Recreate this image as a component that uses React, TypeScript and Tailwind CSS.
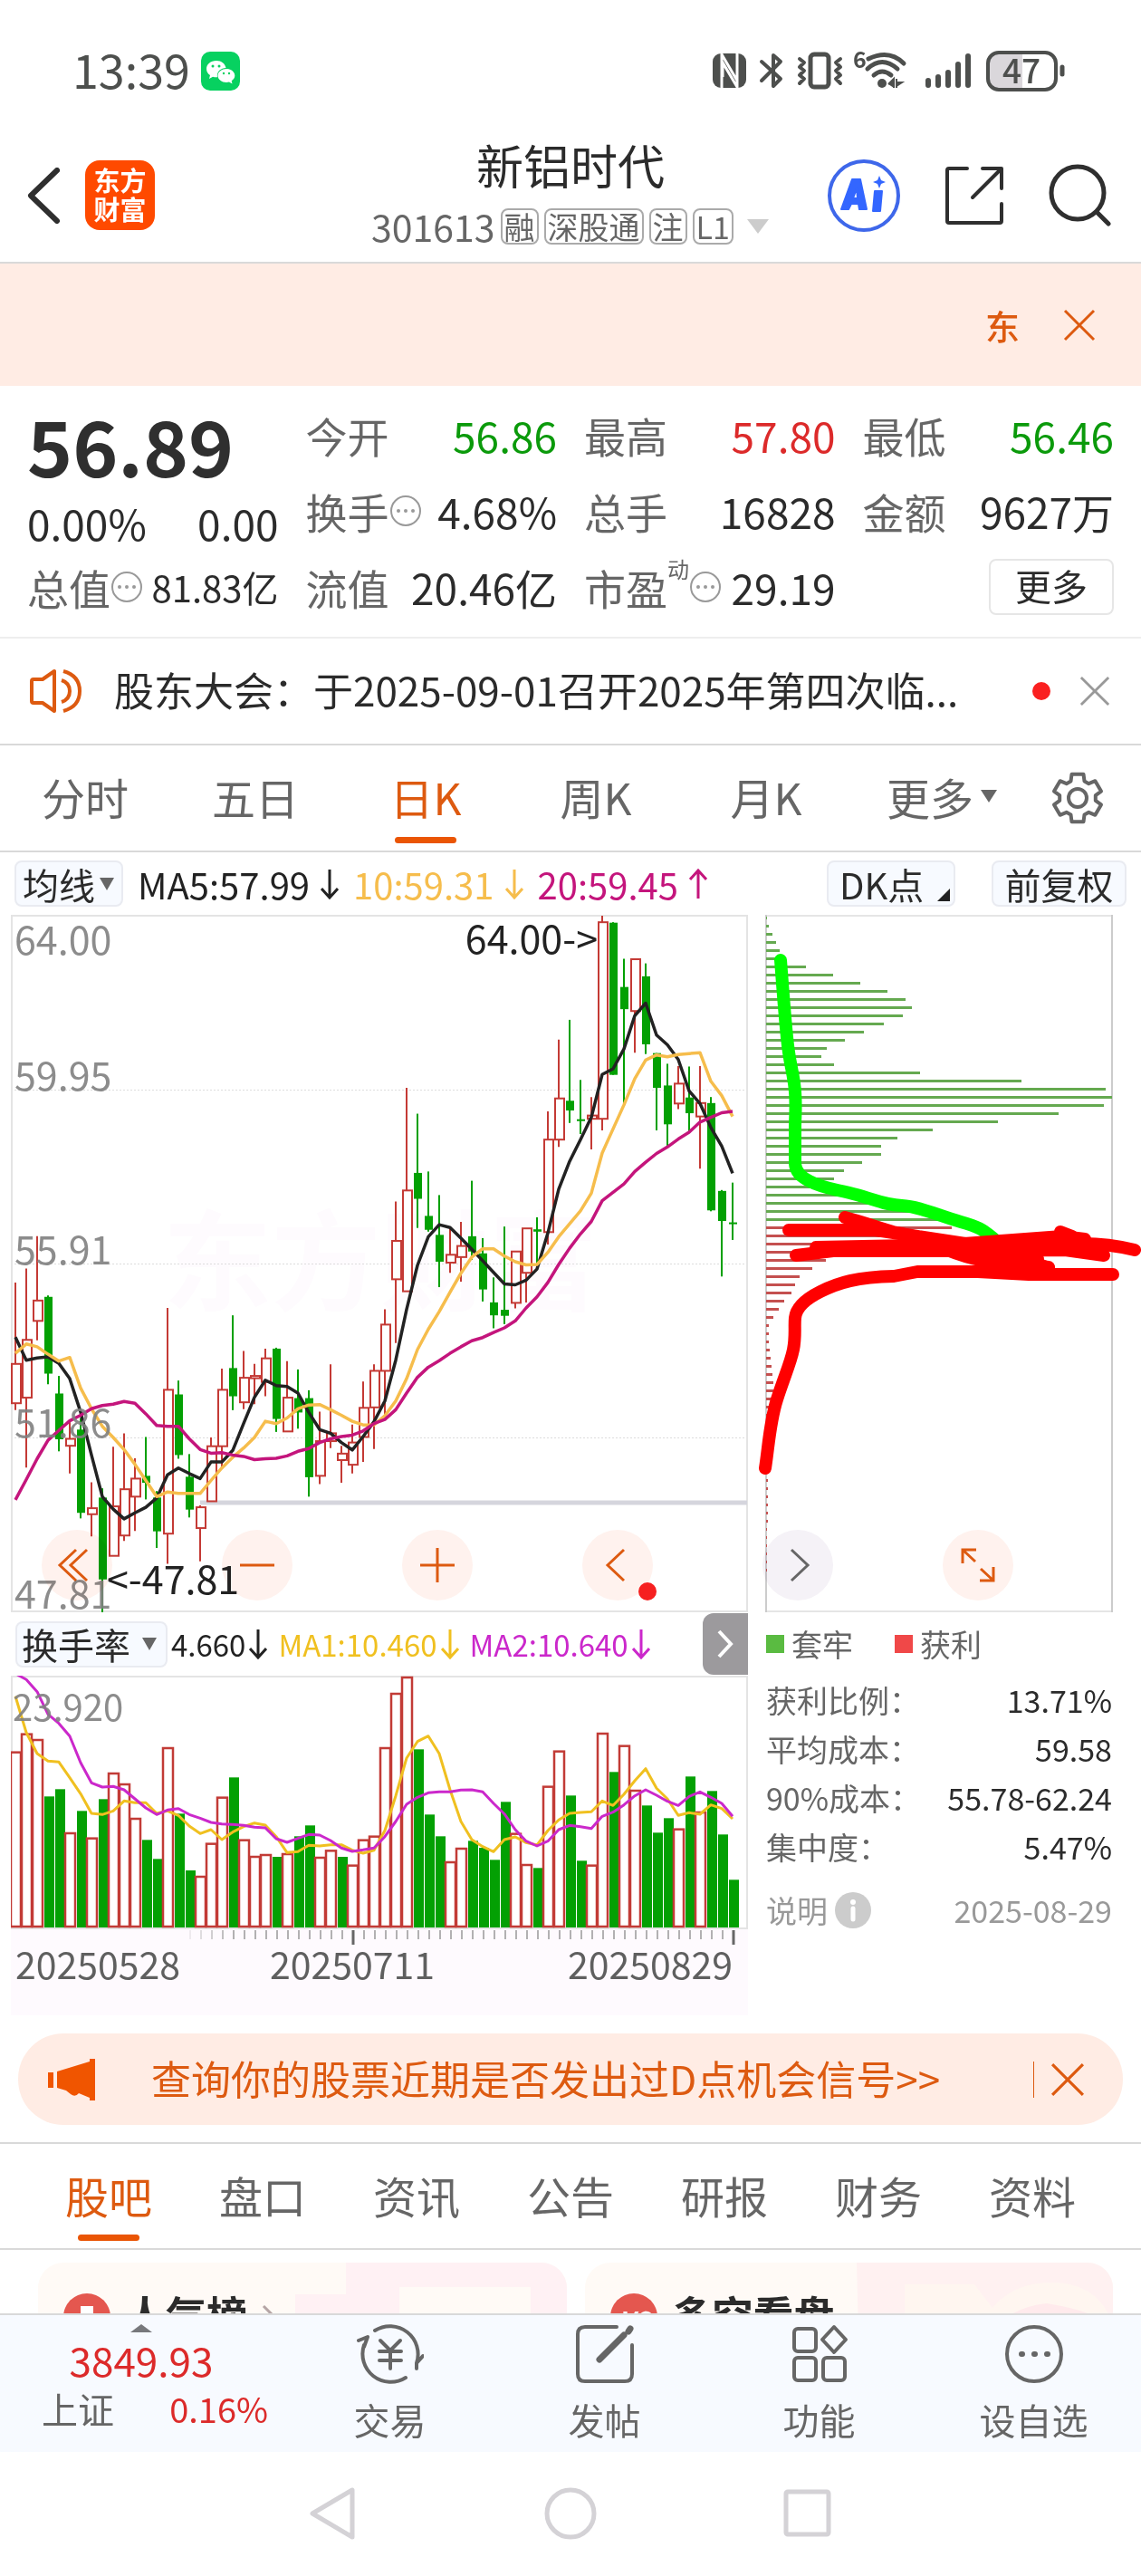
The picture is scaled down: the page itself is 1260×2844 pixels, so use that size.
import React from 'react';
import clsx from 'clsx';

// [direction, high, bodyTop, bodyBottom, low, turnoverTop]
type Candle = ['r' | 'g', number, number, number, number, number];

const candles: Candle[] = [
  ['r', 817, 993, 1078, 1093, 463],
  ['r', 787, 941, 1066, 1217, 403],
  ['r', 717, 856, 900, 942, 422],
  ['g', 845, 848, 1014, 1037, 612],
  ['g', 1019, 1057, 1156, 1182, 588],
  ['r', 1115, 1155, 1170, 1230, 731],
  ['g', 1110, 1135, 1315, 1327, 660],
  ['r', 1249, 1305, 1318, 1366, 748],
  ['g', 1262, 1282, 1459, 1530, 621],
  ['r', 1172, 1301, 1408, 1408, 533],
  ['r', 1143, 1264, 1364, 1376, 569],
  ['r', 1197, 1241, 1280, 1354, 683],
  ['g', 1151, 1235, 1250, 1286, 756],
  ['g', 1268, 1282, 1355, 1391, 819],
  ['r', 872, 1049, 1360, 1425, 449],
  ['g', 1029, 1059, 1190, 1198, 669],
  ['g', 1188, 1237, 1308, 1325, 857],
  ['r', 1299, 1303, 1348, 1420, 875],
  ['r', 1152, 1171, 1290, 1290, 766],
  ['r', 1003, 1049, 1171, 1218, 613],
  ['g', 888, 1002, 1063, 1093, 549],
  ['r', 965, 1023, 1076, 1091, 754],
  ['r', 993, 1019, 1024, 1080, 809],
  ['r', 960, 981, 1032, 1063, 803],
  ['g', 958, 960, 1112, 1140, 812],
  ['r', 987, 1066, 1139, 1139, 800],
  ['g', 1005, 1067, 1098, 1133, 744],
  ['g', 1050, 1067, 1238, 1280, 708],
  ['r', 1096, 1160, 1235, 1253, 812],
  ['r', 994, 1143, 1160, 1175, 789],
  ['g', 1170, 1187, 1201, 1250, 812],
  ['r', 1124, 1163, 1211, 1230, 838],
  ['r', 1031, 1088, 1151, 1205, 754],
  ['r', 994, 1008, 1087, 1177, 742],
  ['r', 875, 908, 1008, 1105, 449],
  ['r', 642, 727, 810, 948, 269],
  ['r', 396, 618, 836, 836, 215],
  ['g', 452, 580, 636, 699, 456],
  ['g', 577, 673, 703, 707, 672],
  ['g', 628, 714, 772, 827, 744],
  ['r', 700, 757, 774, 796, 827],
  ['r', 686, 738, 762, 815, 782],
  ['g', 597, 717, 750, 768, 759],
  ['g', 721, 754, 832, 858, 782],
  ['g', 806, 860, 888, 916, 822],
  ['g', 696, 876, 889, 907, 630],
  ['r', 750, 750, 861, 873, 733],
  ['r', 700, 700, 796, 860, 836],
  ['g', 676, 702, 707, 780, 849],
  ['r', 447, 508, 708, 735, 577],
  ['r', 292, 419, 508, 524, 460],
  ['g', 249, 424, 445, 472, 609],
  ['g', 379, 464, 468, 496, 825],
  ['r', 416, 456, 463, 529, 838],
  ['r', 24, 38, 463, 488, 401],
  ['g', 38, 39, 368, 368, 531],
  ['r', 117, 178, 226, 430, 442],
  ['r', 118, 118, 230, 320, 590],
  ['g', 127, 155, 302, 323, 642],
  ['g', 321, 321, 396, 488, 732],
  ['g', 344, 391, 475, 525, 684],
  ['r', 349, 387, 430, 442, 718],
  ['g', 350, 417, 451, 492, 546],
  ['r', 349, 429, 458, 571, 662],
  ['g', 416, 429, 661, 663, 594],
  ['g', 617, 619, 684, 804, 738],
  ['g', 601, 687, 690, 725, 888],
];

// the price pane colours these days differently from the turnover pane
const priceColor: Record<number, 'r' | 'g'> = { 30: 'r', 56: 'g' };

const ma5 = [
  935, 985, 980, 978, 992, 1025, 1097, 1190, 1280, 1307, 1328, 1315, 1303, 1283, 1233, 1218, 1230,
  1241, 1205, 1205, 1180, 1122, 1065, 1028, 1040, 1042, 1056, 1098, 1135, 1143, 1163, 1179, 1150,
  1118, 1073, 985, 875, 780, 718, 692, 698, 721, 745, 770, 795, 820, 822, 812, 788, 710, 615, 555,
  508, 460, 367, 355, 312, 240, 213, 282, 303, 335, 403, 430, 482, 522, 581,
];
const ma10 = [
  970, 950, 956, 972, 987, 979, 1045, 1090, 1128, 1152, 1178, 1210, 1245, 1280, 1270, 1273, 1273,
  1273, 1245, 1218, 1195, 1175, 1152, 1117, 1122, 1110, 1090, 1082, 1081, 1092, 1104, 1117, 1125,
  1125, 1105, 1073, 1025, 962, 918, 880, 838, 797, 762, 744, 744, 760, 772, 779, 778, 752, 718,
  690, 662, 624, 537, 485, 433, 376, 336, 325, 329, 324, 322, 320, 382, 413, 458,
];
const ma20 = [
  1287, 1243, 1198, 1158, 1137, 1116, 1104, 1090, 1083, 1080, 1074, 1078, 1101, 1126, 1128, 1128,
  1155, 1178, 1186, 1185, 1190, 1193, 1200, 1198, 1197, 1192, 1182, 1176, 1163, 1155, 1150, 1147,
  1138, 1122, 1113, 1092, 1056, 1022, 1000, 986, 970, 956, 943, 936, 925, 915, 900, 872, 848, 817,
  778, 743, 712, 685, 640, 622, 604, 577, 557, 538, 524, 507, 492, 470, 460, 450, 447,
];
const turnoverMa1 = [
  280, 400, 470, 495, 498, 550, 603, 668, 672, 660, 627, 633, 633, 668, 660, 675, 710, 735, 722,
  755, 730, 712, 700, 707, 745, 798, 795, 774, 776, 772, 772, 790, 800, 790, 725, 610, 485, 430,
  412, 470, 590, 695, 755, 778, 795, 755, 746, 765, 773, 725, 690, 668, 665, 663, 627, 642, 605,
  560, 520, 585, 620, 675, 666, 671, 640, 652, 686,
];
const turnoverMa2 = [
  205, 225, 265, 340, 370, 412, 500, 567, 581, 579, 590, 620, 650, 672, 657, 652, 672, 684, 698,
  703, 705, 708, 714, 716, 752, 764, 751, 738, 740, 758, 783, 794, 789, 783, 745, 695, 638, 615,
  600, 597, 597, 591, 590, 597, 635, 670, 722, 760, 776, 760, 722, 708, 712, 718, 678, 664, 640,
  610, 590, 608, 628, 642, 612, 597, 615, 635, 678,
];

// chip distribution, top price first
const trapped = [
  1, 3, 7, 11, 15, 16, 44, 74, 104, 134, 154, 161, 151, 130, 108, 87, 67, 61, 75, 170, 282, 375,
  382, 373, 323, 256, 184, 145, 127, 127, 106, 86, 75, 76, 104, 134, 160, 190,
];
const profit = [
  205, 195, 140, 92, 66, 51, 37, 32, 28, 20, 14, 8, 3, 3, 3, 4, 5, 6, 7, 8, 8, 8, 7, 6, 5, 5, 4, 4,
  3, 3, 2, 2, 2, 2, 2, 2, 2, 1, 1, 1, 1, 1, 1,
];

const cx = (i: number) => 5 + i * 12;
const py = (v: number) => ((v - 22) * 770) / 1508;
const vy = (v: number) => (v - 212) / 3;
const line = (values: number[], y: (v: number) => number) =>
  values.map((v, i) => `${cx(i)},${y(v).toFixed(1)}`).join(' ');

const gearPath = Array.from({ length: 6 })
  .flatMap((_, k) =>
    [[-22, 20], [-14, 27], [14, 27], [22, 20]].map(([d, r]) => {
      const a = ((k * 60 - 90 + d) * Math.PI) / 180;
      return `${(30 + r * Math.cos(a)).toFixed(1)},${(30 + r * Math.sin(a)).toFixed(1)}`;
    })
  )
  .join(' ');

function Cross({ size, className }: { size: number; className?: string }) {
  return (
    <svg width={size} height={size} viewBox="0 0 36 36" className={className}>
      <path d="M2 2 34 34M34 2 2 34" stroke="currentColor" strokeWidth="3" fill="none" />
    </svg>
  );
}

function Arrow({ up = false }: { up?: boolean }) {
  return (
    <svg width="20" height="34" viewBox="0 0 20 34" className={up ? 'rotate-180' : ''}>
      <path d="M10 1V32M1 22 10 32 19 22" stroke="currentColor" strokeWidth="3" fill="none" />
    </svg>
  );
}

function More() {
  return (
    <svg width="36" height="36" viewBox="0 0 36 36" className="text-[#999]">
      <circle cx="18" cy="18" r="16" stroke="currentColor" strokeWidth="2" fill="none" />
      <g fill="currentColor">
        <circle cx="10" cy="18" r="2" />
        <circle cx="18" cy="18" r="2" />
        <circle cx="26" cy="18" r="2" />
      </g>
    </svg>
  );
}

function StatusBar() {
  return (
    <div className="flex h-[110px] items-center justify-between pt-[46px] pr-[83px] pl-20 text-[#4d4f4d]">
      <div className="flex items-center gap-3">
        <span className="pb-1 text-[52px] leading-none">13:39</span>
        <svg width="43" height="43" viewBox="0 0 43 43">
          <rect width="43" height="43" rx="10" fill="#07d160" />
          <path
            d="M17 10c-6.600 0-11 4-11 9 0 3 1.500 5.500 4 7l-1 4 4-2.300c1.300.4 2.600.6 4 .6l1-.1c-1-6 4-10.200 9.500-10.200C26.500 13 22.500 10 17 10z"
            fill="#fff"
          />
          <path
            d="M28 19c-5 0-9.500 3.200-9.500 7.500S23 34 28 34c1 0 2-.2 3-.5l3.500 2-.8-3.300c2.200-1.400 3.600-3.400 3.600-5.700C37.300 22.200 33 19 28 19z"
            fill="#fff"
          />
          <g fill="#07d160">
            <circle cx="13" cy="16" r="1.500" />
            <circle cx="20" cy="16" r="1.500" />
            <circle cx="25" cy="24" r="1.200" />
            <circle cx="31" cy="24" r="1.200" />
          </g>
        </svg>
      </div>
      <svg width="390" height="46" viewBox="0 0 390 46" className="overflow-visible">
        {/* nfc */}
        <rect x="0" y="4" width="37" height="38" rx="9" fill="currentColor" />
        <path d="M10 42V5L27 34V17M27 4V41L11 14V30" stroke="#fff" strokeWidth="3" fill="none" />
        {/* bluetooth */}
        <path
          d="M54 13 75 32 67 40V6L75 13 54 34"
          stroke="currentColor"
          strokeWidth="4"
          fill="none"
          strokeLinecap="round"
          strokeLinejoin="round"
        />
        {/* vibrate */}
        <rect x="108" y="5" width="20" height="36" rx="4" stroke="currentColor" strokeWidth="5" fill="none" />
        <path
          d="M96 10l5 4-5 5 5 4-5 5 5 4-5 5M141 10l-5 4 5 5-5 4 5 5-5 4 5 5"
          stroke="currentColor"
          strokeWidth="4"
          fill="none"
          strokeLinecap="round"
          strokeLinejoin="round"
        />
        {/* wifi */}
        <text x="155" y="20" fontSize="25" fontWeight="700" fill="currentColor">
          6
        </text>
        <g stroke="currentColor" strokeWidth="5" fill="none" strokeLinecap="round">
          <path d="M172 10Q195 -1 211 15" />
          <path d="M171 21Q187 6 204 21" />
          <path d="M178 28Q187 20 197 28" />
        </g>
        <circle cx="187" cy="37" r="5" fill="currentColor" />
        <path d="M194 38l6-6v10M203 42V32M203 40l6-4h-6" stroke="currentColor" strokeWidth="2" fill="currentColor" />
        {/* signal */}
        <path
          d="M238 34V39M249 30V39M260 25V39M271 16V39M282 7V39"
          stroke="currentColor"
          strokeWidth="6"
          strokeLinecap="round"
        />
        {/* battery */}
        <path d="M342 4H314Q304 4 304 14V32Q304 42 314 42H342Z" fill="#dad7db" />
        <rect x="304" y="3" width="75" height="41" rx="12" stroke="currentColor" strokeWidth="4" fill="none" />
        <path d="M386 19V27" stroke="currentColor" strokeWidth="5" strokeLinecap="round" />
        <text x="341" y="37" fontSize="37" fontWeight="500" textAnchor="middle" fill="currentColor">
          47
        </text>
      </svg>
    </div>
  );
}

function Header() {
  return (
    <header className="grid h-[181px] grid-cols-[1fr_auto_1fr] items-center border-b-2 border-[#d9d9d9] px-[30px] pt-8">
      <div className="flex items-center gap-7">
        <button aria-label="返回">
          <svg width="36" height="62" viewBox="0 0 36 62">
            <path
              d="M33 3 4 31 33 59"
              stroke="#2f2f2f"
              strokeWidth="6"
              fill="none"
              strokeLinecap="round"
              strokeLinejoin="round"
            />
          </svg>
        </button>
        <a
          href="#home"
          className="flex size-[77px] flex-col items-center justify-center rounded-2xl bg-[#ff4a00] pb-1 text-[29px] leading-[32px] font-bold text-white"
        >
          <span>东方</span>
          <span>财富</span>
        </a>
      </div>
      <div className="text-center">
        <h1 className="text-[52px] leading-[68px] text-[#2b2b2b]">新铝时代</h1>
        <button className="flex h-[68px] items-center gap-[6px] text-[34px] leading-none text-[#666]">
          <span className="text-[41px]">301613</span>
          {['融', '深股通', '注', 'L1'].map((tag) => (
            <span key={tag} className="flex h-10 items-center rounded-lg border-2 border-[#aaa] px-[2px]">
              {tag}
            </span>
          ))}
          <svg width="26" height="18" viewBox="0 0 26 18" className="ml-2">
            <path d="M1 1H25L13 17Z" fill="#ccc" />
          </svg>
        </button>
      </div>
      <div className="flex items-center justify-end gap-[47px] pr-[3px]">
        <button aria-label="AI">
          <svg width="82" height="82" viewBox="0 0 82 82">
            <circle cx="41" cy="41" r="38" stroke="#3e67ea" strokeWidth="4" fill="none" />
            <path
              d="M28 23h9l7 33h-8l-1-6h-8l-3 6h-8zM33 33l-4 11h5z"
              fill="#3366ff"
              stroke="#3366ff"
              strokeWidth="2"
              strokeLinejoin="round"
              fillRule="evenodd"
            />
            <path d="M53 36h8l-2 22h-8z" fill="#3366ff" stroke="#3366ff" strokeWidth="2" strokeLinejoin="round" />
            <path d="M58 19l2 5 5 2-5 2-2 5-2-5-5-2 5-2z" fill="#3366ff" />
          </svg>
        </button>
        <button aria-label="分享">
          <svg width="68" height="68" viewBox="0 0 68 68">
            <path
              d="M26 4H6Q4 4 4 6V62Q4 64 6 64H62Q64 64 64 62V43M43 4H64V26M63 5 32 36"
              stroke="#2f2f2f"
              strokeWidth="4"
              fill="none"
              strokeLinecap="round"
              strokeLinejoin="round"
            />
          </svg>
        </button>
        <button aria-label="搜索">
          <svg width="70" height="70" viewBox="0 0 70 70">
            <circle cx="33" cy="32" r="29" stroke="#2f2f2f" strokeWidth="5" fill="none" />
            <path d="M54 53 67 66" stroke="#2f2f2f" strokeWidth="5" strokeLinecap="round" />
          </svg>
        </button>
      </div>
    </header>
  );
}

function Stat({
  label,
  value,
  icon,
  sup,
  color = 'text-[#2b2b2b]',
  size = 'text-[46px]',
}: {
  label: string;
  value: string;
  icon?: boolean;
  sup?: string;
  color?: string;
  size?: string;
}) {
  return (
    <div className="flex h-[84px] items-center whitespace-nowrap">
      <dt className="flex items-center text-[46px] leading-none text-[#666]">
        {label}
        {sup && <sup className="-top-5 text-[24px]">{sup}</sup>}
        {icon && <More />}
      </dt>
      <dd className={clsx('ml-auto leading-none', size, color)}>{value}</dd>
    </div>
  );
}

function Quote() {
  return (
    <section className="grid grid-cols-4 gap-x-[30px] border-b-2 border-[#eee] px-[30px] pt-3 pb-[13px]">
      <div>
        <div className="flex h-[110px] items-center pb-2 text-[85px] leading-none font-bold text-[#2f2f2f]">56.89</div>
        <div className="flex h-[58px] items-center justify-between text-[46px] leading-none text-[#2b2b2b]">
          <span>0.00%</span>
          <span>0.00</span>
        </div>
        <dl>
          <Stat label="总值" icon value="81.83亿" size="text-[40px]" />
        </dl>
      </div>
      <dl>
        <Stat label="今开" value="56.86" color="text-[#0b9a0b]" />
        <Stat label="换手" icon value="4.68%" />
        <Stat label="流值" value="20.46亿" />
      </dl>
      <dl>
        <Stat label="最高" value="57.80" color="text-[#dc2a2a]" />
        <Stat label="总手" value="16828" />
        <Stat label="市盈" sup="动" icon value="29.19" />
      </dl>
      <div>
        <dl>
          <Stat label="最低" value="56.46" color="text-[#0b9a0b]" />
          <Stat label="金额" value="9627万" />
        </dl>
        <div className="flex h-[84px] items-center justify-end">
          <button className="h-[62px] w-[138px] rounded-lg border-2 border-[#e6e6e6] pb-1 text-[40px] leading-none text-[#2b2b2b]">
            更多
          </button>
        </div>
      </div>
    </section>
  );
}

function Notice() {
  return (
    <div className="flex h-[118px] items-center border-b-2 border-[#d9d9d9] pr-[34px] pl-[33px]">
      <svg width="60" height="50" viewBox="0 0 60 50" className="mr-[33px] shrink-0 text-[#dd5a10]">
        <path
          d="M27 3V47L14 38H4Q2 38 2 36V14Q2 12 4 12H14ZM35 13Q44 16 44 25T35 37M37 3Q55 8 55 25T37 47"
          stroke="currentColor"
          strokeWidth="4"
          fill="none"
          strokeLinejoin="round"
        />
      </svg>
      <a href="#notice" className="pb-1 text-[44px] leading-none whitespace-nowrap text-[#2b2b2b]">
        股东大会：于2025-09-01召开2025年第四次临...
      </a>
      <span className="ml-auto size-5 shrink-0 rounded-full bg-[#fa2020]" />
      <button aria-label="关闭公告" className="ml-8">
        <Cross size={34} className="text-[#999]" />
      </button>
    </div>
  );
}

function Tab({ label, active, onClick }: { label: string; active: boolean; onClick: () => void }) {
  return (
    <button
      onClick={onClick}
      className={clsx('relative pb-1 text-[48px] leading-none', active ? 'text-[#dd5a10]' : 'text-[#666]')}
    >
      {label}
      {active && (
        <span className="absolute bottom-2 left-1/2 h-[7px] w-[68px] -translate-x-1/2 rounded-full bg-[#ea5504]" />
      )}
    </button>
  );
}

function PeriodTabs() {
  const [active, setActive] = React.useState('日K');
  return (
    <nav className="grid h-[118px] grid-cols-[repeat(5,188fr)_200fr_120fr] border-b-2 border-[#d9d9d9]">
      {['分时', '五日', '日K', '周K', '月K'].map((tab) => (
        <Tab key={tab} label={tab} active={active === tab} onClick={() => setActive(tab)} />
      ))}
      <button className="flex items-center justify-center gap-2 pb-1 text-[48px] leading-none text-[#666]">
        更多
        <svg width="18" height="14" viewBox="0 0 18 14">
          <path d="M0 0H18L9 14Z" fill="currentColor" />
        </svg>
      </button>
      <button aria-label="设置" className="flex items-center pl-5">
        <svg width="60" height="60" viewBox="0 0 60 60" className="text-[#666]">
          <polygon points={gearPath} stroke="currentColor" strokeWidth="4" fill="none" strokeLinejoin="round" />
          <circle cx="30" cy="30" r="10" stroke="currentColor" strokeWidth="4" fill="none" />
        </svg>
      </button>
    </nav>
  );
}

const chipButton =
  'flex h-[51px] items-center rounded-lg border-2 border-[#e9ebf1] bg-[#f7faff] text-[40px] leading-none text-[#2b2b2b]';

function MaBar() {
  return (
    <div className="flex h-[69px] items-center pr-4 pl-4 text-[40px] leading-none whitespace-nowrap">
      <button className={clsx(chipButton, 'w-[120px] justify-center gap-1')}>
        均线
        <svg width="18" height="14" viewBox="0 0 18 14">
          <path d="M1 0H17L9 14Z" fill="#666" />
        </svg>
      </button>
      <span className="ml-4 flex items-center gap-3 text-[#222]">
        MA5:57.99 <Arrow />
      </span>
      <span className="ml-4 flex items-center gap-3 text-[#f6bd4c]">
        10:59.31 <Arrow />
      </span>
      <span className="ml-4 flex items-center gap-3 text-[#c4157c]">
        20:59.45 <Arrow up />
      </span>
      <button className={clsx(chipButton, 'mr-10 ml-auto w-[142px] justify-between pr-1 pl-3')}>
        DK点
        <svg width="14" height="14" viewBox="0 0 14 14" className="mt-6">
          <path d="M14 0V14H0Z" fill="#222" />
        </svg>
      </button>
      <button className={clsx(chipButton, 'w-[149px] justify-center')}>前复权</button>
    </div>
  );
}

function CandleChart() {
  return (
    <svg viewBox="0 0 814 770" className="block w-full" role="img" aria-label="日K">
      <text x="408" y="428" fontSize="120" fontWeight="700" textAnchor="middle" fill="#fefbfe">
        东方财富
      </text>
      <g stroke="#ddd" strokeDasharray="2 2">
        <path d="M0 193.500H814M0 385.500H814M0 577.500H814" />
      </g>
      <rect x="1" y="1" width="812" height="768" fill="none" stroke="#e4e4e4" strokeWidth="2" />
      <path d="M209 649H813" stroke="#d5d5dd" strokeWidth="5" />
      {candles.map(([dir, high, top, bottom, low], i) => {
        const x = cx(i);
        const red = (priceColor[i] ?? dir) === 'r';
        const h = Math.max(py(bottom) - py(top), 2);
        return red ? (
          <g key={i} stroke="#c43a35" strokeWidth="2" fill="#fff">
            <path d={`M${x} ${py(high)}V${py(top)}M${x} ${py(bottom)}V${py(low)}`} />
            <rect x={x - 4} y={py(top)} width="10" height={h} />
          </g>
        ) : (
          <g key={i} fill="#03a003">
            <rect x={x - 1} y={py(high)} width="2" height={py(low) - py(high)} />
            <rect x={x - 4} y={py(top)} width="9" height={h} />
          </g>
        );
      })}
      <g fill="none" strokeWidth="3.500" strokeLinejoin="round">
        <polyline points={line(ma5, py)} stroke="#222" />
        <polyline points={line(ma10, py)} stroke="#f6bd4c" />
        <polyline points={line(ma20, py)} stroke="#c4157c" />
      </g>
      <g fontSize="43" fill="#808080" fillOpacity="0.9">
        <text x="4" y="44">64.00</text>
        <text x="4" y="194">59.95</text>
        <text x="4" y="386">55.91</text>
        <text x="4" y="577">51.86</text>
        <text x="4" y="766">47.81</text>
      </g>
      <g fontSize="43" fill="#222">
        <text x="648" y="43" textAnchor="end">
          64.00-&gt;
        </text>
        <text x="106" y="750">&lt;-47.81</text>
      </g>
    </svg>
  );
}

function ChipChart() {
  return (
    <svg viewBox="0 0 382 770" className="block w-full overflow-visible" role="img" aria-label="筹码分布">
      <path d="M0 1H382M0 769H382" stroke="#ccc" />
      <path d="M0 0V770M382 0V770" stroke="#ccc" strokeWidth="2" />
      <g fill="#65a950">
        {trapped.map((w, i) => (
          <rect key={i} x="0" y={2 + i * 9} width={w} height="3" />
        ))}
      </g>
      <g fill="#c4504f">
        {profit.map((w, i) => (
          <rect key={i} x="0" y={344 + i * 9} width={w} height="3" />
        ))}
      </g>
      <g fill="none" strokeWidth="14" strokeLinecap="round" strokeLinejoin="round">
        <path
          d="M16 50C18 75 20 105 23 135S28 165 31 186 32 220 32 235V275Q33 287 48 294C62 302 78 303 100 309S130 320 150 321 190 332 215 339 240 349 252 358"
          stroke="#0f0"
        />
        <g stroke="#f00">
          <path d="M383 397H290L234 394H167L141 399C100 400 80 406 60 416 40 426 33 435 32 445S33 465 30 480 20 510 12 535C4 560 3 585-1 611" />
          <path d="M87 334C110 340 122 345 140 350L174 357 205 363H350Q378 363 407 370" />
          <path d="M25 348H121L167 355 220 363 270 374 312 390" />
          <path d="M55 367 205 364 327 355 352 358" />
          <path d="M33 376 74 371H224L330 370 373 376" />
          <path d="M200 370C230 382 250 384 272 385L312 389M220 374 300 380M325 350 338 355" />
        </g>
      </g>
    </svg>
  );
}

function TurnoverChart() {
  return (
    <svg viewBox="0 0 814 375" className="block w-full" role="img" aria-label="换手率">
      <rect x="0" y="280" width="814" height="95" fill="#fefafe" />
      <rect x="1" y="1" width="812" height="278" fill="#fff" stroke="#e4e4e4" strokeWidth="2" />
      {candles.map(([dir, , , , , top], i) => {
        const y = vy(top);
        return dir === 'r' ? (
          <rect
            key={i}
            x={cx(i) - 5}
            y={y + 1}
            width="11"
            height={276 - y}
            fill="#fff"
            stroke="#c23b36"
            strokeWidth="2.500"
          />
        ) : (
          <rect key={i} x={cx(i) - 4} y={y} width="11" height={278 - y} fill="#03a003" />
        );
      })}
      <g fill="none" strokeWidth="3" strokeLinejoin="round">
        <polyline points={line(turnoverMa1, vy)} stroke="#f0c020" />
        <polyline points={line(turnoverMa2, vy)} stroke="#cb28cb" />
      </g>
      <g stroke="#666">
        {candles.map((_, i) => {
          if (i < 16) return null;
          const major = i === 31 || i === 66;
          return (
            <path
              key={i}
              d={`M${cx(i) + 1} 281V${major ? 297 : 291}`}
              strokeWidth={major ? 3 : 1}
              opacity={Math.min(1, (i - 15) / 5)}
            />
          );
        })}
      </g>
      <text x="2" y="50" fontSize="40" fill="#808080" fillOpacity="0.9">
        23.920
      </text>
      <g fontSize="41" fill="#5f5f5f">
        <text x="5" y="335">20250528</text>
        <text x="286" y="335">20250711</text>
        <text x="797" y="335" textAnchor="end">
          20250829
        </text>
      </g>
    </svg>
  );
}

const zoomControls = [
  { label: '最左', d: 'M38 22 20 39 38 56M50 22 32 39 50 56' },
  { label: '缩小', d: 'M20 39H58' },
  { label: '放大', d: 'M20 39H58M39 20V58' },
  { label: '左移', d: 'M46 22 28 39 46 56', dot: true },
  { label: '右移', d: 'M32 22 50 39 32 56', gray: true },
  { label: '全屏', d: 'M22 37V22H37M22 22 36 35M56 41V56H41M42 43 56 56' },
];

function ChartControls() {
  return (
    <div className="absolute bottom-[13px] left-[34px] flex gap-[121px]">
      {zoomControls.map((c) => (
        <button
          key={c.label}
          aria-label={c.label}
          className={clsx(
            'relative size-[78px] rounded-full mix-blend-multiply',
            c.gray ? 'bg-[#f5f2f7] text-[#666]' : 'bg-[#fff2ee] text-[#dd5a10]'
          )}
        >
          <svg viewBox="0 0 78 78">
            <path d={c.d} stroke="currentColor" strokeWidth="3" fill="none" />
          </svg>
          {c.dot && <span className="absolute -right-1 bottom-0 size-5 rounded-full bg-[#f62020]" />}
        </button>
      ))}
    </div>
  );
}

function TurnoverBar() {
  return (
    <div className="flex h-[70px] items-center pl-[5px] text-[33px] leading-none whitespace-nowrap">
      <button className={clsx(chipButton, 'w-[168px] justify-between px-[5px]')}>
        换手率
        <svg width="18" height="14" viewBox="0 0 18 14" className="mr-1">
          <path d="M1 0H17L9 14Z" fill="#666" />
        </svg>
      </button>
      <span className="ml-1 flex items-center gap-1 text-[#222]">
        4.660 <Arrow />
      </span>
      <span className="ml-3 flex items-center gap-1 text-[#f0c020]">
        MA1:10.460 <Arrow />
      </span>
      <span className="ml-3 flex items-center gap-1 text-[#cb28cb]">
        MA2:10.640 <Arrow />
      </span>
      <button
        aria-label="展开"
        className="ml-auto flex h-[68px] w-[50px] items-center justify-center rounded-l-xl bg-[#9c9a9d]"
      >
        <svg width="20" height="32" viewBox="0 0 20 32">
          <path d="M3 2 16 16 3 30" stroke="#fff" strokeWidth="4" fill="none" />
        </svg>
      </button>
    </div>
  );
}

const chipStats = [
  ['获利比例：', '13.71%'],
  ['平均成本：', '59.58'],
  ['90%成本：', '55.78-62.24'],
  ['集中度：', '5.47%'],
];

function ChipStats() {
  return (
    <div className="text-[34px] leading-none whitespace-nowrap text-[#666]">
      <div className="flex h-[70px] items-center gap-[46px]">
        <span className="flex items-center gap-2">
          <i className="size-5 bg-[#5abb41]" />
          套牢
        </span>
        <span className="flex items-center gap-2">
          <i className="size-5 bg-[#f04848]" />
          获利
        </span>
      </div>
      <dl>
        {chipStats.map(([label, value]) => (
          <div key={label} className="flex h-[54px] items-center justify-between">
            <dt>{label}</dt>
            <dd className="text-[#2b2b2b]">{value}</dd>
          </div>
        ))}
      </dl>
      <div className="flex h-[86px] items-center justify-between text-[#999]">
        <button className="flex items-center gap-2">
          说明
          <svg width="40" height="40" viewBox="0 0 40 40">
            <circle cx="20" cy="20" r="20" fill="#ccc" />
            <path d="M20 18V30" stroke="#fff" strokeWidth="5" strokeLinecap="round" />
            <circle cx="20" cy="11" r="3" fill="#fff" />
          </svg>
        </button>
        <span>2025-08-29</span>
      </div>
    </div>
  );
}

function Charts() {
  return (
    <section className="pr-8 pl-3">
      <div className="relative grid grid-cols-[814fr_382fr] gap-x-5">
        <CandleChart />
        <ChipChart />
        <ChartControls />
      </div>
      <div className="grid grid-cols-[814fr_382fr] gap-x-5">
        <div>
          <TurnoverBar />
          <TurnoverChart />
        </div>
        <ChipStats />
      </div>
    </section>
  );
}

function Promo() {
  return (
    <div className="mx-5 mt-5 mb-[19px] flex h-[101px] items-center rounded-[50px] bg-[#ffece4] pr-[42px] pl-[33px] text-[#dd5a10]">
      <svg width="54" height="46" viewBox="0 0 54 46" className="mr-[60px] shrink-0">
        <path d="M0 15H6V32H0ZM10 14 46 3V0H52V46H46V43L34 38Q30 43 25 39L20 35 10 32Z" fill="#f05500" />
      </svg>
      <a href="#signal" className="pb-1 text-[44px] leading-none whitespace-nowrap">
        查询你的股票近期是否发出过D点机会信号&gt;&gt;
      </a>
      <span className="ml-auto h-10 w-px bg-[#dd5a10]" />
      <button aria-label="关闭推荐" className="ml-[18px]">
        <Cross size={38} />
      </button>
    </div>
  );
}

function ContentTabs() {
  const [active, setActive] = React.useState('股吧');
  return (
    <nav className="grid h-[119px] grid-cols-7 border-y-2 border-[#d9d9d9] px-[35px]">
      {['股吧', '盘口', '资讯', '公告', '研报', '财务', '资料'].map((tab) => (
        <Tab key={tab} label={tab} active={active === tab} onClick={() => setActive(tab)} />
      ))}
    </nav>
  );
}

function Cards() {
  return (
    <div className="grid h-[70px] grid-cols-2 gap-5 overflow-hidden pt-[14px] pr-[31px] pl-[42px] text-[45px] leading-none font-bold text-[#2b2b2b]">
      <a href="#rank" className="relative flex h-[160px] overflow-hidden rounded-[28px] bg-[#fffaf6] px-7 pt-[34px]">
        <svg viewBox="0 0 300 160" className="absolute top-0 right-0 h-full">
          <path d="M56 0H300V160H0V35H56Z" fill="#fff1f4" />
          <path d="M115 27H260V160H115Z" fill="#fffaf6" />
        </svg>
        <svg width="52" height="52" viewBox="0 0 52 52" className="relative mr-4">
          <circle cx="26" cy="26" r="26" fill="#e4574f" />
          <path d="M19 14H33V26H41V40H11V24H19Z" fill="#fff" />
        </svg>
        <span className="relative">人气榜</span>
        <svg width="20" height="40" viewBox="0 0 20 40" className="relative mt-2 ml-4">
          <path d="M2 6 16 20 2 34" stroke="#b5a5a5" strokeWidth="3" fill="none" />
        </svg>
      </a>
      <a href="#sentiment" className="relative flex h-[160px] overflow-hidden rounded-[28px] bg-[#fffaf6] px-7 pt-[34px]">
        <svg viewBox="0 0 283 160" className="absolute top-0 right-0 h-full">
          <path d="M0 0H283V160H4Z" fill="#fff1f1" />
          <path d="M53 24H130L150 50Q175 20 220 22 270 25 283 70V160H53Z" fill="#fff6f0" />
          <path d="M55 57H88V160H55ZM150 160V80Q165 50 210 45 240 50 255 56V160Z" fill="#ffeaec" />
        </svg>
        <svg width="52" height="52" viewBox="0 0 52 52" className="relative mr-4">
          <circle cx="26" cy="26" r="26" fill="#e4574f" />
          <text x="26" y="40" fontSize="27" fontWeight="700" fontStyle="italic" textAnchor="middle" fill="#fff">
            VS
          </text>
        </svg>
        <span className="relative">多空看盘</span>
      </a>
    </div>
  );
}

const actions = [
  {
    label: '交易',
    icon: (
      <>
        <path d="M20 10A31 31 0 0 1 66 46M73 38 66 46 66 52M54 62A31 31 0 0 1 8 26M2 21 12 17 8 28" />
        <path d="M26 21 37 32 48 21M37 32V52M25 33H49M25 43H49" />
      </>
    ),
  },
  {
    label: '发帖',
    icon: (
      <>
        <path d="M50 6H15Q7 6 7 14V58Q7 66 15 66H59Q67 66 67 58V26" />
        <path d="M31 42 58 15M63 11 65 8" strokeWidth="7" />
      </>
    ),
  },
  {
    label: '功能',
    icon: (
      <>
        <rect x="9" y="8" width="24" height="25" rx="4" />
        <rect x="9" y="40" width="24" height="25" rx="4" />
        <rect x="41" y="40" width="24" height="25" rx="4" />
        <path d="M53 6 66 20 53 34 40 20Z" />
      </>
    ),
  },
  {
    label: '设自选',
    icon: (
      <>
        <circle cx="37" cy="36" r="30" />
        <path d="M23 36h1M37 36h1M51 36h1" strokeWidth="6" />
      </>
    ),
  },
];

function BottomBar() {
  return (
    <div className="grid h-[153px] grid-cols-[312fr_237fr_237fr_237fr_237fr] border-t-2 border-[#d9d9d9] bg-[#f7faff] text-[40px] leading-none text-[#666]">
      <button className="flex flex-col items-center pt-[10px]">
        <svg width="24" height="9" viewBox="0 0 24 9">
          <path d="M0 9 12 0 24 9Z" fill="#77787c" />
        </svg>
        <span className="mt-2 text-[44px] text-[#dc2a2a]">3849.93</span>
        <span className="mt-3 flex w-full items-center justify-between pr-4 pl-[46px]">
          <span>上证</span>
          <span className="text-[38px] text-[#dc2a2a]">0.16%</span>
        </span>
      </button>
      {actions.map((a) => (
        <button key={a.label} className="flex flex-col items-center pt-[7px]">
          <svg
            width="74"
            height="72"
            viewBox="0 0 74 72"
            stroke="currentColor"
            strokeWidth="4"
            fill="none"
            strokeLinecap="round"
            strokeLinejoin="round"
          >
            {a.icon}
          </svg>
          <span className="mt-4">{a.label}</span>
        </button>
      ))}
    </div>
  );
}

function SystemNav() {
  return (
    <div className="flex h-[136px] items-center justify-center gap-[202px] text-[#d4d2d6]">
      <button aria-label="后退">
        <svg width="60" height="60" viewBox="0 0 60 60">
          <path d="M51 4V56L7 30Z" stroke="currentColor" strokeWidth="5" fill="none" strokeLinejoin="round" />
        </svg>
      </button>
      <button aria-label="主屏幕">
        <svg width="60" height="60" viewBox="0 0 60 60">
          <circle cx="30" cy="30" r="26" stroke="currentColor" strokeWidth="5" fill="none" />
        </svg>
      </button>
      <button aria-label="最近任务">
        <svg width="60" height="60" viewBox="0 0 60 60">
          <rect x="6" y="6" width="47" height="47" rx="2" stroke="currentColor" strokeWidth="5" fill="none" />
        </svg>
      </button>
    </div>
  );
}

export default function App() {
  return (
    <div className="min-h-screen bg-white font-['Noto_Sans_CJK_SC',sans-serif]">
      <StatusBar />
      <Header />
      <div className="flex h-[135px] items-center justify-end gap-12 bg-[#ffece4] pr-[50px] text-[#dd5a10]">
        <a href="#broker" className="text-[38px] leading-none font-medium">
          东
        </a>
        <button aria-label="关闭横幅">
          <Cross size={36} />
        </button>
      </div>
      <Quote />
      <Notice />
      <PeriodTabs />
      <MaBar />
      <Charts />
      <Promo />
      <ContentTabs />
      <Cards />
      <BottomBar />
      <SystemNav />
    </div>
  );
}
